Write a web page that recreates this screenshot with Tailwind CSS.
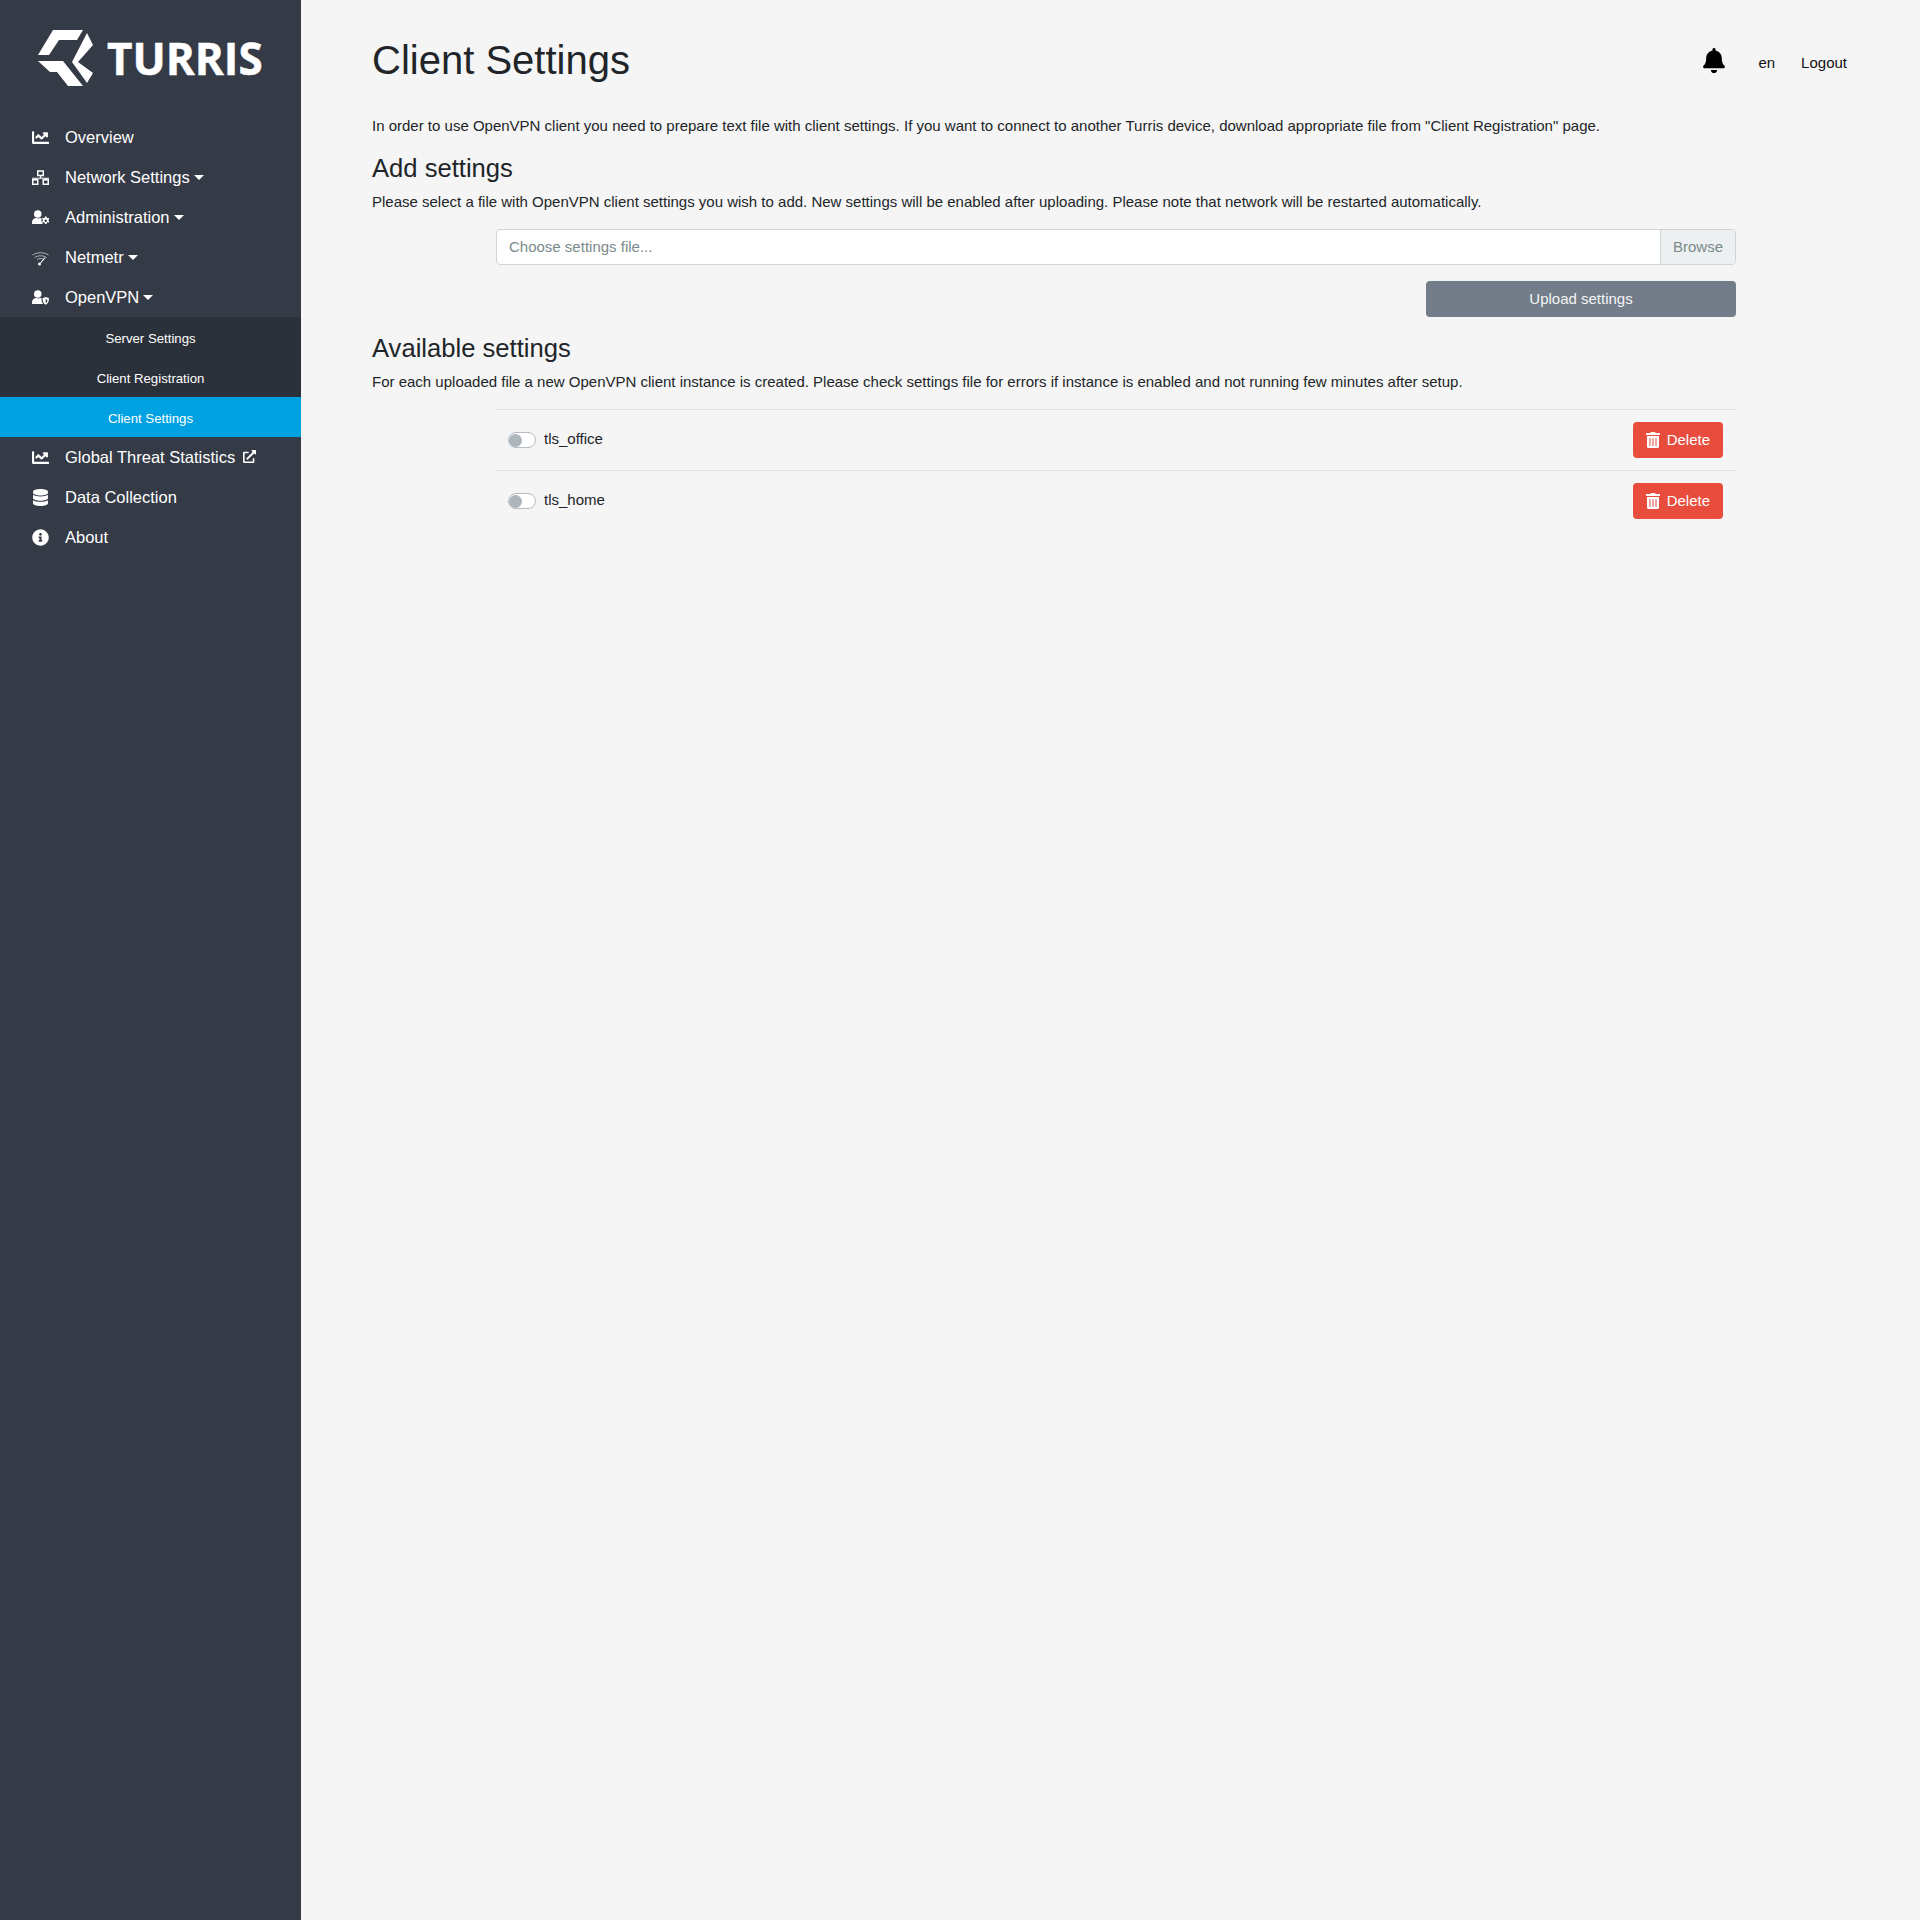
<!DOCTYPE html>
<html lang="en">

<head>
  <meta charset="UTF-8" />
  <title>Client Settings</title>
  <script src="https://cdn.jsdelivr.net/npm/@tailwindcss/browser@4"></script>
</head>

<body class="bg-[#f5f5f5] font-['Liberation_Sans',sans-serif] text-[#212529]">
  <div class="flex h-[1920px]">

    <!-- Sidebar -->
    <aside class="w-[301px] shrink-0 bg-[#343a46] text-white">
      <div class="flex items-center h-[117px] pl-[38px]">
        <svg class="w-[56px] h-[56px] -mt-[1px] shrink-0" viewBox="38 30 56 56" fill="#fff">
          <polygon points="53,30 83,30 77,40 59,40 49,55 38,55" />
          <polygon points="87,33 93,45 78,62 93,73 87,83 72,62" />
          <polygon points="38,61 63,61 83,86 68,86 57,72 50,72" />
        </svg>
        <span class="ml-[13px] -mt-[2px] font-['Open_Sans',sans-serif] font-bold text-[44px] leading-none [-webkit-text-stroke:0.5px_white]">TURRIS</span>
      </div>

      <nav class="text-[16.5px]">
        <a class="flex items-center h-[40px] pl-[32px]">
          <svg class="w-[17px] h-[17px] mr-[16px] shrink-0" viewBox="0 0 512 512" fill="#fff"><path d="M496 384H64V80c0-8.84-7.16-16-16-16H16C7.16 64 0 71.16 0 80v336c0 17.67 14.33 32 32 32h464c8.84 0 16-7.16 16-16v-32c0-8.84-7.16-16-16-16zM464 96H345.94c-21.38 0-32.09 25.85-16.97 40.97l32.4 32.4L288 242.75l-73.37-73.37c-12.5-12.5-32.76-12.5-45.25 0l-68.69 68.69c-6.25 6.25-6.25 16.38 0 22.63l22.62 22.62c6.25 6.25 16.38 6.25 22.63 0L192 237.25l73.37 73.37c12.5 12.5 32.76 12.5 45.25 0l96-96 32.4 32.4c15.12 15.12 40.97 4.41 40.97-16.97V112c0-8.84-7.16-16-16-16z" /></svg>
          Overview
        </a>
        <a class="flex items-center h-[40px] pl-[32px]">
          <svg class="w-[17px] h-[17px] mr-[16px] shrink-0" viewBox="0 0 34 34" fill="none" stroke="#fff" stroke-width="3"><rect x="11.500" y="4" width="11" height="9" /><path d="M17 12v6M0 18.500h34M6.500 18.500v4M27.500 18.500v4" stroke-width="2.400" /><rect x="1.500" y="21.500" width="10" height="9" /><rect x="22.500" y="21.500" width="10" height="9" /></svg>
          Network Settings<span class="inline-block ml-[4px] w-0 h-0 border-t-[5px] border-x-[5px] border-t-white border-x-transparent"></span>
        </a>
        <a class="flex items-center h-[40px] pl-[32px]">
          <svg class="w-[17px] h-[17px] mr-[16px] shrink-0" viewBox="0 0 34 34" fill="#fff"><circle cx="11.500" cy="10" r="7.500" /><path d="M0 30v-3c0-6 4-9 8-9h1c2.400 1 4.600 1 7 0h3c-1 4 .5 9 3 12z" /><path fill-rule="evenodd" d="M26 15h3l.7 2.500 1.800.9 2.300-1 1.200 2.400-1.800 1.600v2.200l1.800 1.600-1.200 2.400-2.300-1-1.800.9-.7 2.500h-3l-.7-2.500-1.800-.9-2.300 1-1.200-2.400 1.800-1.600v-2.200l-1.800-1.600 1.200-2.400 2.300 1 1.800-.9zM27.500 21a2.400 2.400 0 1 0 0 4.800 2.400 2.400 0 0 0 0-4.800z" /></svg>
          Administration<span class="inline-block ml-[4px] w-0 h-0 border-t-[5px] border-x-[5px] border-t-white border-x-transparent"></span>
        </a>
        <a class="flex items-center h-[40px] pl-[32px]">
          <svg class="w-[17px] h-[17px] mr-[16px] shrink-0" viewBox="0 0 34 34" fill="none" stroke="#cfd2d6" stroke-width="1.600"><path d="M1 12c9-6 23-6 32 0M5 17c7-4.500 17-4.500 24 0M10 21c4-2.500 10-2.500 14 0" /><path d="M26 17.500L17 28" stroke="#fff" stroke-width="2.200" /><circle cx="15" cy="30" r="3" fill="#fff" stroke="none" /></svg>
          Netmetr<span class="inline-block ml-[4px] w-0 h-0 border-t-[5px] border-x-[5px] border-t-white border-x-transparent"></span>
        </a>
        <a class="flex items-center h-[40px] pl-[32px]">
          <svg class="w-[17px] h-[17px] mr-[16px] shrink-0" viewBox="0 0 34 34" fill="#fff"><circle cx="11.500" cy="10" r="7.500" /><path d="M0 30v-3c0-6 4-9 8-9h1c2.400 1 4.600 1 7 0h3c-.5 4 .5 9 3.500 12z" /><path fill-rule="evenodd" d="M27.500 16l6.500 2.500c0 6.500-2 11-6.500 13-4.500-2-6.500-6.500-6.500-13zM27.500 20v8.500c2-1.300 3-3.500 3.300-6.500z" /></svg>
          OpenVPN<span class="inline-block ml-[4px] w-0 h-0 border-t-[5px] border-x-[5px] border-t-white border-x-transparent"></span>
        </a>

        <div class="text-[13.2px] text-center">
          <a class="flex items-center justify-center h-[40px] pt-[3px] bg-[#2b313a]">Server Settings</a>
          <a class="flex items-center justify-center h-[40px] pt-[3px] bg-[#2b313a]">Client Registration</a>
          <a class="flex items-center justify-center h-[40px] pt-[3px] bg-[#00a2e2]">Client Settings</a>
        </div>

        <a class="flex items-center h-[40px] pl-[32px]">
          <svg class="w-[17px] h-[17px] mr-[16px] shrink-0" viewBox="0 0 512 512" fill="#fff"><path d="M496 384H64V80c0-8.84-7.16-16-16-16H16C7.16 64 0 71.16 0 80v336c0 17.67 14.33 32 32 32h464c8.84 0 16-7.16 16-16v-32c0-8.84-7.16-16-16-16zM464 96H345.94c-21.38 0-32.09 25.85-16.97 40.97l32.4 32.4L288 242.75l-73.37-73.37c-12.5-12.5-32.76-12.5-45.25 0l-68.69 68.69c-6.25 6.25-6.25 16.38 0 22.63l22.62 22.62c6.25 6.25 16.38 6.25 22.63 0L192 237.25l73.37 73.37c12.5 12.5 32.76 12.5 45.25 0l96-96 32.4 32.4c15.12 15.12 40.97 4.41 40.97-16.97V112c0-8.84-7.16-16-16-16z" /></svg>
          Global Threat Statistics
          <svg class="w-[13px] h-[13px] ml-[8px] -mt-[1px]" viewBox="0 0 512 512" fill="#fff"><path d="M432,320H400a16,16,0,0,0-16,16V448H64V128H208a16,16,0,0,0,16-16V80a16,16,0,0,0-16-16H48A48,48,0,0,0,0,112V464a48,48,0,0,0,48,48H400a48,48,0,0,0,48-48V336A16,16,0,0,0,432,320ZM488,0h-128c-21.37,0-32.05,25.91-17,41l35.73,35.73L135,320.37a24,24,0,0,0,0,34L157.67,377a24,24,0,0,0,34,0L435.28,133.32,471,169c15,15,41,4.5,41-17V24A24,24,0,0,0,488,0Z" /></svg>
        </a>
        <a class="flex items-center h-[40px] pl-[32px]">
          <svg class="w-[17px] h-[17px] mr-[16px] shrink-0" viewBox="0 0 448 512" fill="#fff"><path d="M448 73.143v45.714C448 159.143 347.667 192 224 192S0 159.143 0 118.857V73.143C0 32.857 100.333 0 224 0s224 32.857 224 73.143zM448 176v102.857C448 319.143 347.667 352 224 352S0 319.143 0 278.857V176c48.125 33.143 136.208 48.572 224 48.572S399.874 209.143 448 176zm0 160v102.857C448 479.143 347.667 512 224 512S0 479.143 0 438.857V336c48.125 33.143 136.208 48.572 224 48.572S399.874 369.143 448 336z" /></svg>
          Data Collection
        </a>
        <a class="flex items-center h-[40px] pl-[32px]">
          <svg class="w-[17px] h-[17px] mr-[16px] shrink-0" viewBox="0 0 512 512" fill="#fff"><path d="M256 8C119.043 8 8 119.083 8 256c0 136.997 111.043 248 248 248s248-111.003 248-248C504 119.083 392.957 8 256 8zm0 110c23.196 0 42 18.804 42 42s-18.804 42-42 42-42-18.804-42-42 18.804-42 42-42zm56 254c0 6.627-5.373 12-12 12h-88c-6.627 0-12-5.373-12-12v-24c0-6.627 5.373-12 12-12h12v-64h-12c-6.627 0-12-5.373-12-12v-24c0-6.627 5.373-12 12-12h64c6.627 0 12 5.373 12 12v100h12c6.627 0 12 5.373 12 12v24z" /></svg>
          About
        </a>
      </nav>
    </aside>

    <!-- Main -->
    <main class="flex-1 pl-[71px] pt-[36px] text-[15px]">
      <header class="flex items-center h-[48px] pr-[73px]">
        <h1 class="text-[40px] leading-[48px] font-normal">Client Settings</h1>
        <svg class="ml-auto mt-[1px] w-[22px] h-[25px] text-black" viewBox="0 0 448 512" fill="currentColor"><path d="M224 512c35.32 0 63.97-28.65 63.97-64H160.03c0 35.35 28.65 64 63.97 64zm215.39-149.71c-19.32-20.76-55.47-51.99-55.47-154.29 0-77.7-54.48-139.9-127.94-155.16V32c0-17.67-14.32-32-31.98-32s-31.98 14.33-31.98 32v20.84C118.56 68.1 64.08 130.3 64.08 208c0 102.3-36.15 133.53-55.47 154.29-6 6.45-8.66 14.16-8.61 21.71.11 16.4 12.98 32 32.1 32h383.8c19.12 0 32-15.6 32.1-32 .05-7.55-2.61-15.27-8.61-21.71z" /></svg>
        <a class="ml-[33px] mt-[7px] text-[#111]">en</a>
        <a class="ml-[26px] mt-[7px] text-[#111]">Logout</a>
      </header>

      <div class="w-[1364px]">
        <p class="mt-[31px] leading-[22px]">In order to use OpenVPN client you need to prepare text file with client settings. If you want to connect to another Turris device, download appropriate file from "Client Registration" page.</p>

        <h3 class="mt-[17px] text-[25.6px] leading-[29px] font-normal">Add settings</h3>
        <p class="mt-[8px] leading-[22px]">Please select a file with OpenVPN client settings you wish to add. New settings will be enabled after uploading. Please note that network will be restarted automatically.</p>

        <div class="ml-[124px] mt-[16px]">
          <div class="flex h-[36px] border border-[#ced4da] rounded-[4px] bg-white overflow-hidden">
            <span class="flex-1 flex items-center px-[12px] text-[#7b8a8b]">Choose settings file...</span>
            <span class="flex items-center px-[12px] border-l border-[#ced4da] bg-[#ecf0f1] text-[#7b8a8b]">Browse</span>
          </div>
          <div class="flex justify-end mt-[16px]">
            <button class="w-[310px] h-[36px] rounded-[4px] bg-[#727d89] text-[#f3f4f5]">Upload settings</button>
          </div>
        </div>

        <h3 class="mt-[17px] text-[25.6px] leading-[29px] font-normal">Available settings</h3>
        <p class="mt-[8px] leading-[22px]">For each uploaded file a new OpenVPN client instance is created. Please check settings file for errors if instance is enabled and not running few minutes after setup.</p>

        <ul class="ml-[124px] mt-[16px] w-[1239px]">
          <li class="flex items-center h-[61px] border-t border-[#dee2e6] px-[12px]">
            <span class="flex items-center w-[28px] h-[16px] px-[2px] rounded-full border border-[#b4bbc2] bg-white"><span class="w-[13px] h-[13px] rounded-full bg-[#adb5bd] -ml-[2px]"></span></span>
            <span class="ml-[8px] -mt-[2px]">tls_office</span>
            <button class="ml-auto flex items-center h-[36px] pl-[13px] pr-[13px] rounded-[4px] bg-[#e74c3c] text-white">
              <svg class="w-[14px] h-[16px] mr-[7px]" viewBox="0 0 448 512" fill="#fff"><path d="M32 464a48 48 0 0 0 48 48h288a48 48 0 0 0 48-48V128H32zm272-256a16 16 0 0 1 32 0v224a16 16 0 0 1-32 0zm-96 0a16 16 0 0 1 32 0v224a16 16 0 0 1-32 0zm-96 0a16 16 0 0 1 32 0v224a16 16 0 0 1-32 0zM432 32H312l-9.400-18.700A24 24 0 0 0 281.100 0H166.800a23.720 23.720 0 0 0-21.400 13.300L136 32H16A16 16 0 0 0 0 48v32a16 16 0 0 0 16 16h416a16 16 0 0 0 16-16V48a16 16 0 0 0-16-16z" /></svg>
              Delete
            </button>
          </li>
          <li class="flex items-center h-[61px] border-t border-[#dee2e6] px-[12px]">
            <span class="flex items-center w-[28px] h-[16px] px-[2px] rounded-full border border-[#b4bbc2] bg-white"><span class="w-[13px] h-[13px] rounded-full bg-[#adb5bd] -ml-[2px]"></span></span>
            <span class="ml-[8px] -mt-[2px]">tls_home</span>
            <button class="ml-auto flex items-center h-[36px] pl-[13px] pr-[13px] rounded-[4px] bg-[#e74c3c] text-white">
              <svg class="w-[14px] h-[16px] mr-[7px]" viewBox="0 0 448 512" fill="#fff"><path d="M32 464a48 48 0 0 0 48 48h288a48 48 0 0 0 48-48V128H32zm272-256a16 16 0 0 1 32 0v224a16 16 0 0 1-32 0zm-96 0a16 16 0 0 1 32 0v224a16 16 0 0 1-32 0zm-96 0a16 16 0 0 1 32 0v224a16 16 0 0 1-32 0zM432 32H312l-9.400-18.700A24 24 0 0 0 281.100 0H166.800a23.720 23.720 0 0 0-21.400 13.300L136 32H16A16 16 0 0 0 0 48v32a16 16 0 0 0 16 16h416a16 16 0 0 0 16-16V48a16 16 0 0 0-16-16z" /></svg>
              Delete
            </button>
          </li>
        </ul>
      </div>
    </main>
  </div>
</body>

</html>
